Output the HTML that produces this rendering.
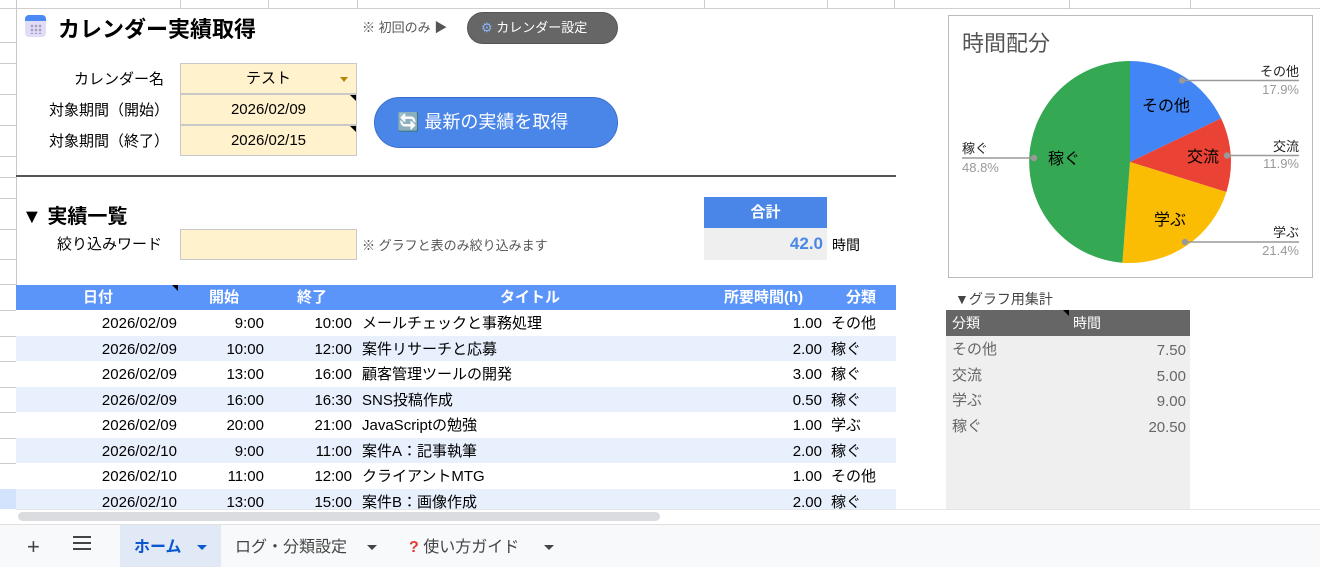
<!DOCTYPE html>
<html><head><meta charset="utf-8"><style>
*{margin:0;padding:0;box-sizing:border-box}
body{width:1320px;height:567px;position:relative;overflow:hidden;background:#fff;font-family:"Liberation Sans","Noto Sans CJK JP",sans-serif;color:#000}
.a{position:absolute;white-space:nowrap}
.hl{position:absolute;height:1px;background:#e2e2e2}
.vl{position:absolute;width:1px;background:#e2e2e2}
.inp{position:absolute;left:180px;width:177px;height:31px;background:#fff2cc;border:1px solid #c8c8c8;font-size:15px;line-height:29px;text-align:center}
.tri{position:absolute;right:0;top:0;width:0;height:0;border-top:6px solid #000;border-left:6px solid transparent}
.row{position:absolute;left:16px;width:880px;height:25.5px;font-size:15px}
.row span{position:absolute;top:0;line-height:27px;height:25px}
.sm span{line-height:25px}
</style></head><body>
<div class="a" style="left:0;top:0;width:1320px;height:9px;background:#fff;border-bottom:1px solid #d0d0d0"></div>
<div class="vl" style="left:180px;top:0;height:9px;background:#ccc"></div>
<div class="vl" style="left:268px;top:0;height:9px;background:#ccc"></div>
<div class="vl" style="left:357px;top:0;height:9px;background:#ccc"></div>
<div class="vl" style="left:704px;top:0;height:9px;background:#ccc"></div>
<div class="vl" style="left:827px;top:0;height:9px;background:#ccc"></div>
<div class="vl" style="left:894px;top:0;height:9px;background:#ccc"></div>
<div class="vl" style="left:1069px;top:0;height:9px;background:#ccc"></div>
<div class="vl" style="left:1190px;top:0;height:9px;background:#ccc"></div>
<div class="vl" style="left:16px;top:0;height:524px;background:#c8c8c8"></div>
<div class="hl" style="left:0;top:42px;width:16px;background:#ccc"></div>
<div class="hl" style="left:0;top:63px;width:16px;background:#ccc"></div>
<div class="hl" style="left:0;top:94px;width:16px;background:#ccc"></div>
<div class="hl" style="left:0;top:125px;width:16px;background:#ccc"></div>
<div class="hl" style="left:0;top:156px;width:16px;background:#ccc"></div>
<div class="hl" style="left:0;top:177px;width:16px;background:#ccc"></div>
<div class="hl" style="left:0;top:198px;width:16px;background:#ccc"></div>
<div class="hl" style="left:0;top:229px;width:16px;background:#ccc"></div>
<div class="hl" style="left:0;top:259px;width:16px;background:#ccc"></div>
<div class="hl" style="left:0;top:284px;width:16px;background:#ccc"></div>
<div class="hl" style="left:0;top:310px;width:16px;background:#ccc"></div>
<div class="hl" style="left:0;top:336px;width:16px;background:#ccc"></div>
<div class="hl" style="left:0;top:361px;width:16px;background:#ccc"></div>
<div class="hl" style="left:0;top:387px;width:16px;background:#ccc"></div>
<div class="hl" style="left:0;top:412px;width:16px;background:#ccc"></div>
<div class="hl" style="left:0;top:438px;width:16px;background:#ccc"></div>
<div class="hl" style="left:0;top:463px;width:16px;background:#ccc"></div>
<div class="a" style="left:0;top:489px;width:16px;height:20px;background:#d3e3fd"></div>

<div class="a" style="left:25px;top:15px;width:21px;height:22px;border-radius:4px;background:#e3dcf7;overflow:hidden">
 <div style="height:6px;background:#4a8af4"></div>
 <div style="position:absolute;left:5px;top:9px;width:12px;height:10px;background:radial-gradient(circle,#a6a0c0 1.2px,transparent 1.5px) 0 0/4px 4px"></div>
</div>
<div class="a" style="left:58px;top:12px;font-size:22px;font-weight:bold">カレンダー実績取得</div>
<div class="a" style="left:362px;top:17px;font-size:13px;color:#555">※ 初回のみ ▶</div>
<div class="a" style="left:467px;top:12px;width:151px;height:32px;border-radius:16px;background:#666;border:1px solid #555;color:#fff;font-size:13px;line-height:30px;padding-left:13px"><span style="color:#8ab4f8">⚙</span> カレンダー設定</div>

<div class="a" style="left:20px;width:144px;top:68px;font-size:15px;text-align:right">カレンダー名</div>
<div class="a" style="left:20px;width:149px;top:99px;font-size:15px;text-align:right">対象期間（開始）</div>
<div class="a" style="left:20px;width:149px;top:130px;font-size:15px;text-align:right">対象期間（終了）</div>
<div class="inp" style="top:63px">テスト<div style="position:absolute;right:8px;top:13px;border-top:5px solid #b8860b;border-left:4px solid transparent;border-right:4px solid transparent"></div></div>
<div class="inp" style="top:94px">2026/02/09<div class="tri"></div></div>
<div class="inp" style="top:125px">2026/02/15<div class="tri"></div></div>
<div class="a" style="left:374px;top:97px;width:244px;height:51px;border-radius:26px;background:#4a86e8;border:1px solid #3a6fcf;color:#fff;font-size:18px;line-height:49px;padding-left:22px">🔄 最新の実績を取得</div>

<div class="a" style="left:16px;top:175px;width:880px;height:2px;background:#555"></div>

<div class="a" style="left:22px;top:200px;font-size:20px;font-weight:bold">▼ 実績一覧</div>
<div class="a" style="left:704px;top:197px;width:123px;height:31px;background:#4a86e8;color:#fff;font-weight:bold;font-size:15px;text-align:center;line-height:31px">合計</div>
<div class="a" style="left:704px;top:228px;width:123px;height:32px;background:#efefef;color:#4a86e8;font-weight:bold;font-size:17px;text-align:right;line-height:32px;padding-right:4px">42.0</div>
<div class="a" style="left:832px;top:235px;font-size:14px">時間</div>
<div class="a" style="left:20px;width:142px;top:233px;font-size:15px;text-align:right">絞り込みワード</div>
<div class="inp" style="top:229px;height:31px"></div>
<div class="a" style="left:362px;top:235px;font-size:13px;color:#555">※ グラフと表のみ絞り込みます</div>

<div class="a" style="left:16px;top:285px;width:880px;height:25px;background:#5b95f9;color:#fff;font-weight:bold;font-size:15px;line-height:25px">
 <span class="a" style="left:67px">日付</span>
 <div class="tri" style="right:auto;left:156px"></div>
 <span class="a" style="left:193px">開始</span>
 <span class="a" style="left:281px">終了</span>
 <span class="a" style="left:484px">タイトル</span>
 <span class="a" style="left:708px">所要時間(h)</span>
 <span class="a" style="left:830px">分類</span>
</div>
<div class="row" style="top:310px;background:#fff"><span style="right:719px">2026/02/09</span><span style="right:632px">9:00</span><span style="right:544px">10:00</span><span style="left:346px">メールチェックと事務処理</span><span style="right:74px">1.00</span><span style="left:815px">その他</span></div>
<div class="row" style="top:335.5px;background:#e8f0fe"><span style="right:719px">2026/02/09</span><span style="right:632px">10:00</span><span style="right:544px">12:00</span><span style="left:346px">案件リサーチと応募</span><span style="right:74px">2.00</span><span style="left:815px">稼ぐ</span></div>
<div class="row" style="top:361px;background:#fff"><span style="right:719px">2026/02/09</span><span style="right:632px">13:00</span><span style="right:544px">16:00</span><span style="left:346px">顧客管理ツールの開発</span><span style="right:74px">3.00</span><span style="left:815px">稼ぐ</span></div>
<div class="row" style="top:386.5px;background:#e8f0fe"><span style="right:719px">2026/02/09</span><span style="right:632px">16:00</span><span style="right:544px">16:30</span><span style="left:346px">SNS投稿作成</span><span style="right:74px">0.50</span><span style="left:815px">稼ぐ</span></div>
<div class="row" style="top:412px;background:#fff"><span style="right:719px">2026/02/09</span><span style="right:632px">20:00</span><span style="right:544px">21:00</span><span style="left:346px">JavaScriptの勉強</span><span style="right:74px">1.00</span><span style="left:815px">学ぶ</span></div>
<div class="row" style="top:437.5px;background:#e8f0fe"><span style="right:719px">2026/02/10</span><span style="right:632px">9:00</span><span style="right:544px">11:00</span><span style="left:346px">案件A：記事執筆</span><span style="right:74px">2.00</span><span style="left:815px">稼ぐ</span></div>
<div class="row" style="top:463px;background:#fff"><span style="right:719px">2026/02/10</span><span style="right:632px">11:00</span><span style="right:544px">12:00</span><span style="left:346px">クライアントMTG</span><span style="right:74px">1.00</span><span style="left:815px">その他</span></div>
<div class="row" style="top:488.5px;height:21px;overflow:hidden;background:#e8f0fe"><span style="right:719px">2026/02/10</span><span style="right:632px">13:00</span><span style="right:544px">15:00</span><span style="left:346px">案件B：画像作成</span><span style="right:74px">2.00</span><span style="left:815px">稼ぐ</span></div>

<div class="a" style="left:948px;top:15px;width:365px;height:263px;border:1px solid #bbb"></div>
<div class="a" style="left:962px;top:26px;font-size:22px;color:#555">時間配分</div>
<svg class="a" style="left:0;top:0" width="1320" height="300" font-family="Liberation Sans, Noto Sans CJK JP, sans-serif">
 <path d="M1130,162 L1130,61 A101,101 0 0 1 1221.1,118.4 Z" fill="#4285f4"/>
 <path d="M1130,162 L1221.1,118.4 A101,101 0 0 1 1226.4,192 Z" fill="#ea4335"/>
 <path d="M1130,162 L1226.4,192 A101,101 0 0 1 1122.4,262.7 Z" fill="#fbbc04"/>
 <path d="M1130,162 L1122.4,262.7 A101,101 0 0 1 1130,61 Z" fill="#34a853"/>
 <g font-size="16" fill="#000" text-anchor="middle">
  <text x="1166" y="111">その他</text><text x="1203" y="162">交流</text><text x="1170" y="225">学ぶ</text><text x="1064" y="164">稼ぐ</text>
 </g>
 <g stroke="#999" stroke-width="1.5" fill="#999">
  <line x1="1182" y1="80.5" x2="1299" y2="80.5"/><circle cx="1182" cy="80.5" r="2.5"/>
  <line x1="1227" y1="155.5" x2="1299" y2="155.5"/><circle cx="1227" cy="155.5" r="2.5"/>
  <line x1="1185" y1="242" x2="1299" y2="242"/><circle cx="1185" cy="242" r="2.5"/>
  <line x1="962" y1="158" x2="1034" y2="158"/><circle cx="1034" cy="158" r="2.5"/>
 </g>
 <g font-size="13" text-anchor="end">
  <text x="1299" y="76" fill="#222">その他</text><text x="1299" y="94" fill="#999">17.9%</text>
  <text x="1299" y="151" fill="#222">交流</text><text x="1299" y="168" fill="#999">11.9%</text>
  <text x="1299" y="237" fill="#222">学ぶ</text><text x="1299" y="255" fill="#999">21.4%</text>
 </g>
 <g font-size="13">
  <text x="962" y="153" fill="#222">稼ぐ</text><text x="962" y="172" fill="#999">48.8%</text>
 </g>
</svg>

<div class="a" style="left:955px;top:289px;font-size:14px;color:#444">▼グラフ用集計</div>
<div class="a" style="left:946px;top:310px;width:244px;height:26px;background:#666;color:#fff;font-size:14px;line-height:26px">
 <span class="a" style="left:6px">分類</span><div class="tri" style="right:auto;left:117px"></div><span class="a" style="left:127px">時間</span>
</div>
<div class="a sm" style="left:946px;top:336px;width:244px;height:173px;background:#efefef;color:#666;font-size:15px">
 <span class="a" style="left:6px;top:1px">その他</span><span class="a" style="right:4px;top:2px">7.50</span>
 <span class="a" style="left:6px;top:27px">交流</span><span class="a" style="right:4px;top:28px">5.00</span>
 <span class="a" style="left:6px;top:52px">学ぶ</span><span class="a" style="right:4px;top:53px">9.00</span>
 <span class="a" style="left:6px;top:78px">稼ぐ</span><span class="a" style="right:4px;top:79px">20.50</span>
</div>

<div class="a" style="left:16px;top:509px;width:1304px;height:15px;background:#fff;border-top:1px solid #e5e5e5"></div>
<div class="a" style="left:18px;top:512px;width:642px;height:9px;border-radius:5px;background:#dadce0"></div>

<div class="a" style="left:0;top:524px;width:1320px;height:43px;background:#f8f9fa;border-top:1px solid #e0e0e0"></div>
<div class="a" style="left:27px;top:534px;font-size:22px;line-height:26px;color:#444">+</div>
<div class="a" style="left:73px;top:536px;width:18px;height:14px;border-top:2px solid #444;border-bottom:2px solid #444"><div style="margin-top:4px;height:2px;background:#444"></div></div>
<div class="a" style="left:120px;top:525px;width:101px;height:42px;background:#e1e9f7"></div>
<div class="a" style="left:134px;top:537px;font-size:16px;line-height:22px;font-weight:bold;color:#0b57d0">ホーム</div>
<div class="a" style="left:197px;top:545px;border-top:5px solid #0b57d0;border-left:5px solid transparent;border-right:5px solid transparent"></div>
<div class="a" style="left:235px;top:537px;font-size:16px;line-height:22px;color:#444">ログ・分類設定</div>
<div class="a" style="left:367px;top:545px;border-top:5px solid #444;border-left:5px solid transparent;border-right:5px solid transparent"></div>
<div class="a" style="left:409px;top:537px;font-size:16px;line-height:22px;color:#444"><span style="color:#e53935;font-weight:bold">?</span> 使い方ガイド</div>
<div class="a" style="left:544px;top:545px;border-top:5px solid #444;border-left:5px solid transparent;border-right:5px solid transparent"></div>
</body></html>
